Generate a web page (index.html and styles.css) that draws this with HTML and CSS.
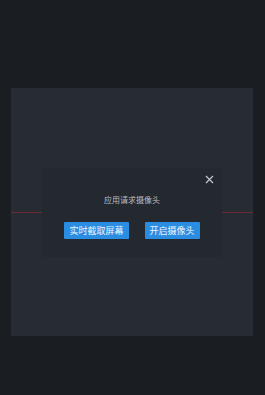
FILE: index.html
```html
<!DOCTYPE html>
<html lang="zh">
<head>
<meta charset="utf-8">
<link rel="stylesheet" href="styles.css">
</head>
<body>
<div class="stage">
  <div class="panel">
    <div class="redline"></div>
    <div class="dialog">
      <div class="dialog-head">
        <svg class="close" width="9" height="9" viewBox="0 0 9 9"><path d="M1 1L8 8M8 1L1 8" stroke="#c4c8cf" stroke-width="1.2" fill="none"/></svg>
      </div>
      <div class="title">应用请求摄像头</div>
      <div class="actions">
        <button class="btn">实时截取屏幕</button>
        <button class="btn">开启摄像头</button>
      </div>
    </div>
  </div>
</div>
</body>
</html>
```
FILE: styles.css
```css
html, body {
  margin: 0;
  padding: 0;
  background: #1a1d21;
  width: 265px;
  height: 395px;
  overflow: hidden;
  font-family: "Noto Sans CJK SC", "Noto Sans", sans-serif;
}
.stage {
  padding: 88px 12px 0 11px;
}
.panel {
  position: relative;
  width: 242px;
  height: 248px;
  background: #262b34;
  box-shadow: 0 0 1px #2e333c;
  display: flex;
  flex-direction: column;
}
.redline {
  margin-top: 124px;
  height: 1px;
  background: #6e2a33;
}
.dialog {
  position: absolute;
  left: 31px;
  top: 80px;
  width: 180px;
  height: 89px;
  background: #24282f;
  display: flex;
  flex-direction: column;
  align-items: center;
}
.dialog-head {
  align-self: stretch;
  display: flex;
  justify-content: flex-end;
  padding: 7px 8px 0 0;
  height: 9px;
}
.title {
  margin-top: 10px;
  font-size: 8px;
  line-height: 12px;
  color: #b9bdc4;
}
.actions {
  margin-top: 16px;
  display: flex;
  gap: 16px;
}
.btn {
  border: none;
  margin: 0;
  background: #2b8de2;
  color: #eef5fc;
  font-family: "Noto Sans CJK SC", sans-serif;
  font-size: 9px;
  line-height: 17px;
  height: 17px;
  padding: 0 5px;
  border-radius: 1px;
}
```
